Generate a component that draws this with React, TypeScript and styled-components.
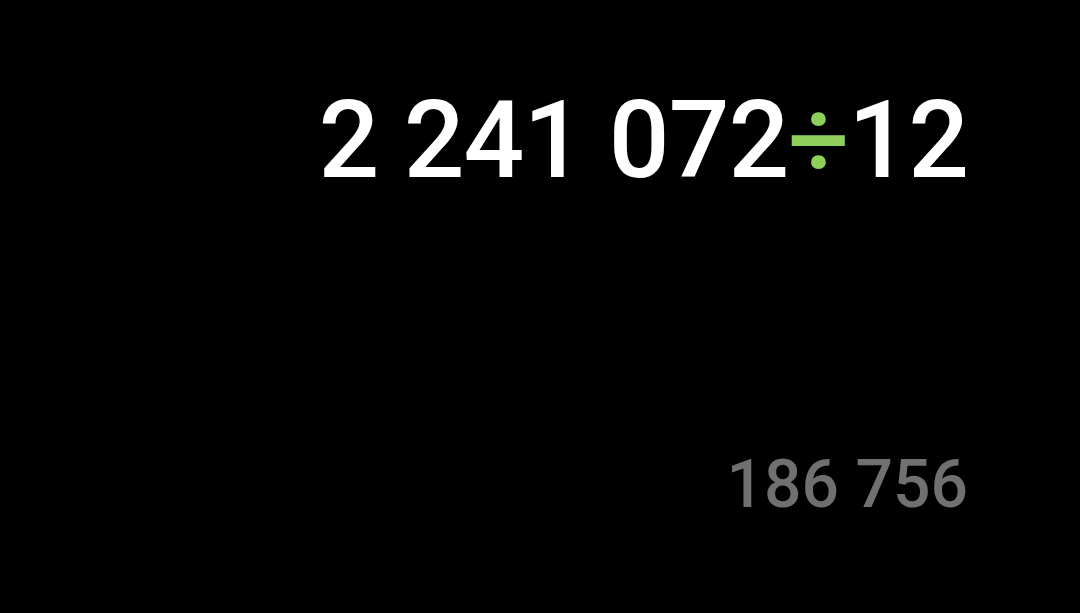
import * as React from "react";
import styled, { createGlobalStyle } from "styled-components";

const GlobalStyle = createGlobalStyle`
  html, body {
    margin: 0;
    padding: 0;
    background: #000;
  }
`;

export default function App() {
  return (
    <>
      <GlobalStyle />
      <Screen>
        <Expression>
          2 241 072<Operator>÷</Operator>12
        </Expression>
        <Result>186 756</Result>
      </Screen>
    </>
  );
}

const Screen = styled.div`
  width: 1080px;
  height: 613px;
  box-sizing: border-box;
  background: #000;
  display: flex;
  flex-direction: column;
  align-items: flex-end;
  padding: 87px 112px 0 0;
  gap: 258px;
  font-family: Roboto, "Noto Sans", sans-serif;
  font-weight: 500;
`;

const Expression = styled.div`
  font-size: 107px;
  line-height: 1;
  letter-spacing: -1px;
  color: #fff;
  white-space: nowrap;
`;

const Operator = styled.span`
  color: #8fcf5c;
`;

const Result = styled.div`
  font-size: 66px;
  line-height: 1;
  color: #707070;
  white-space: nowrap;
`;
